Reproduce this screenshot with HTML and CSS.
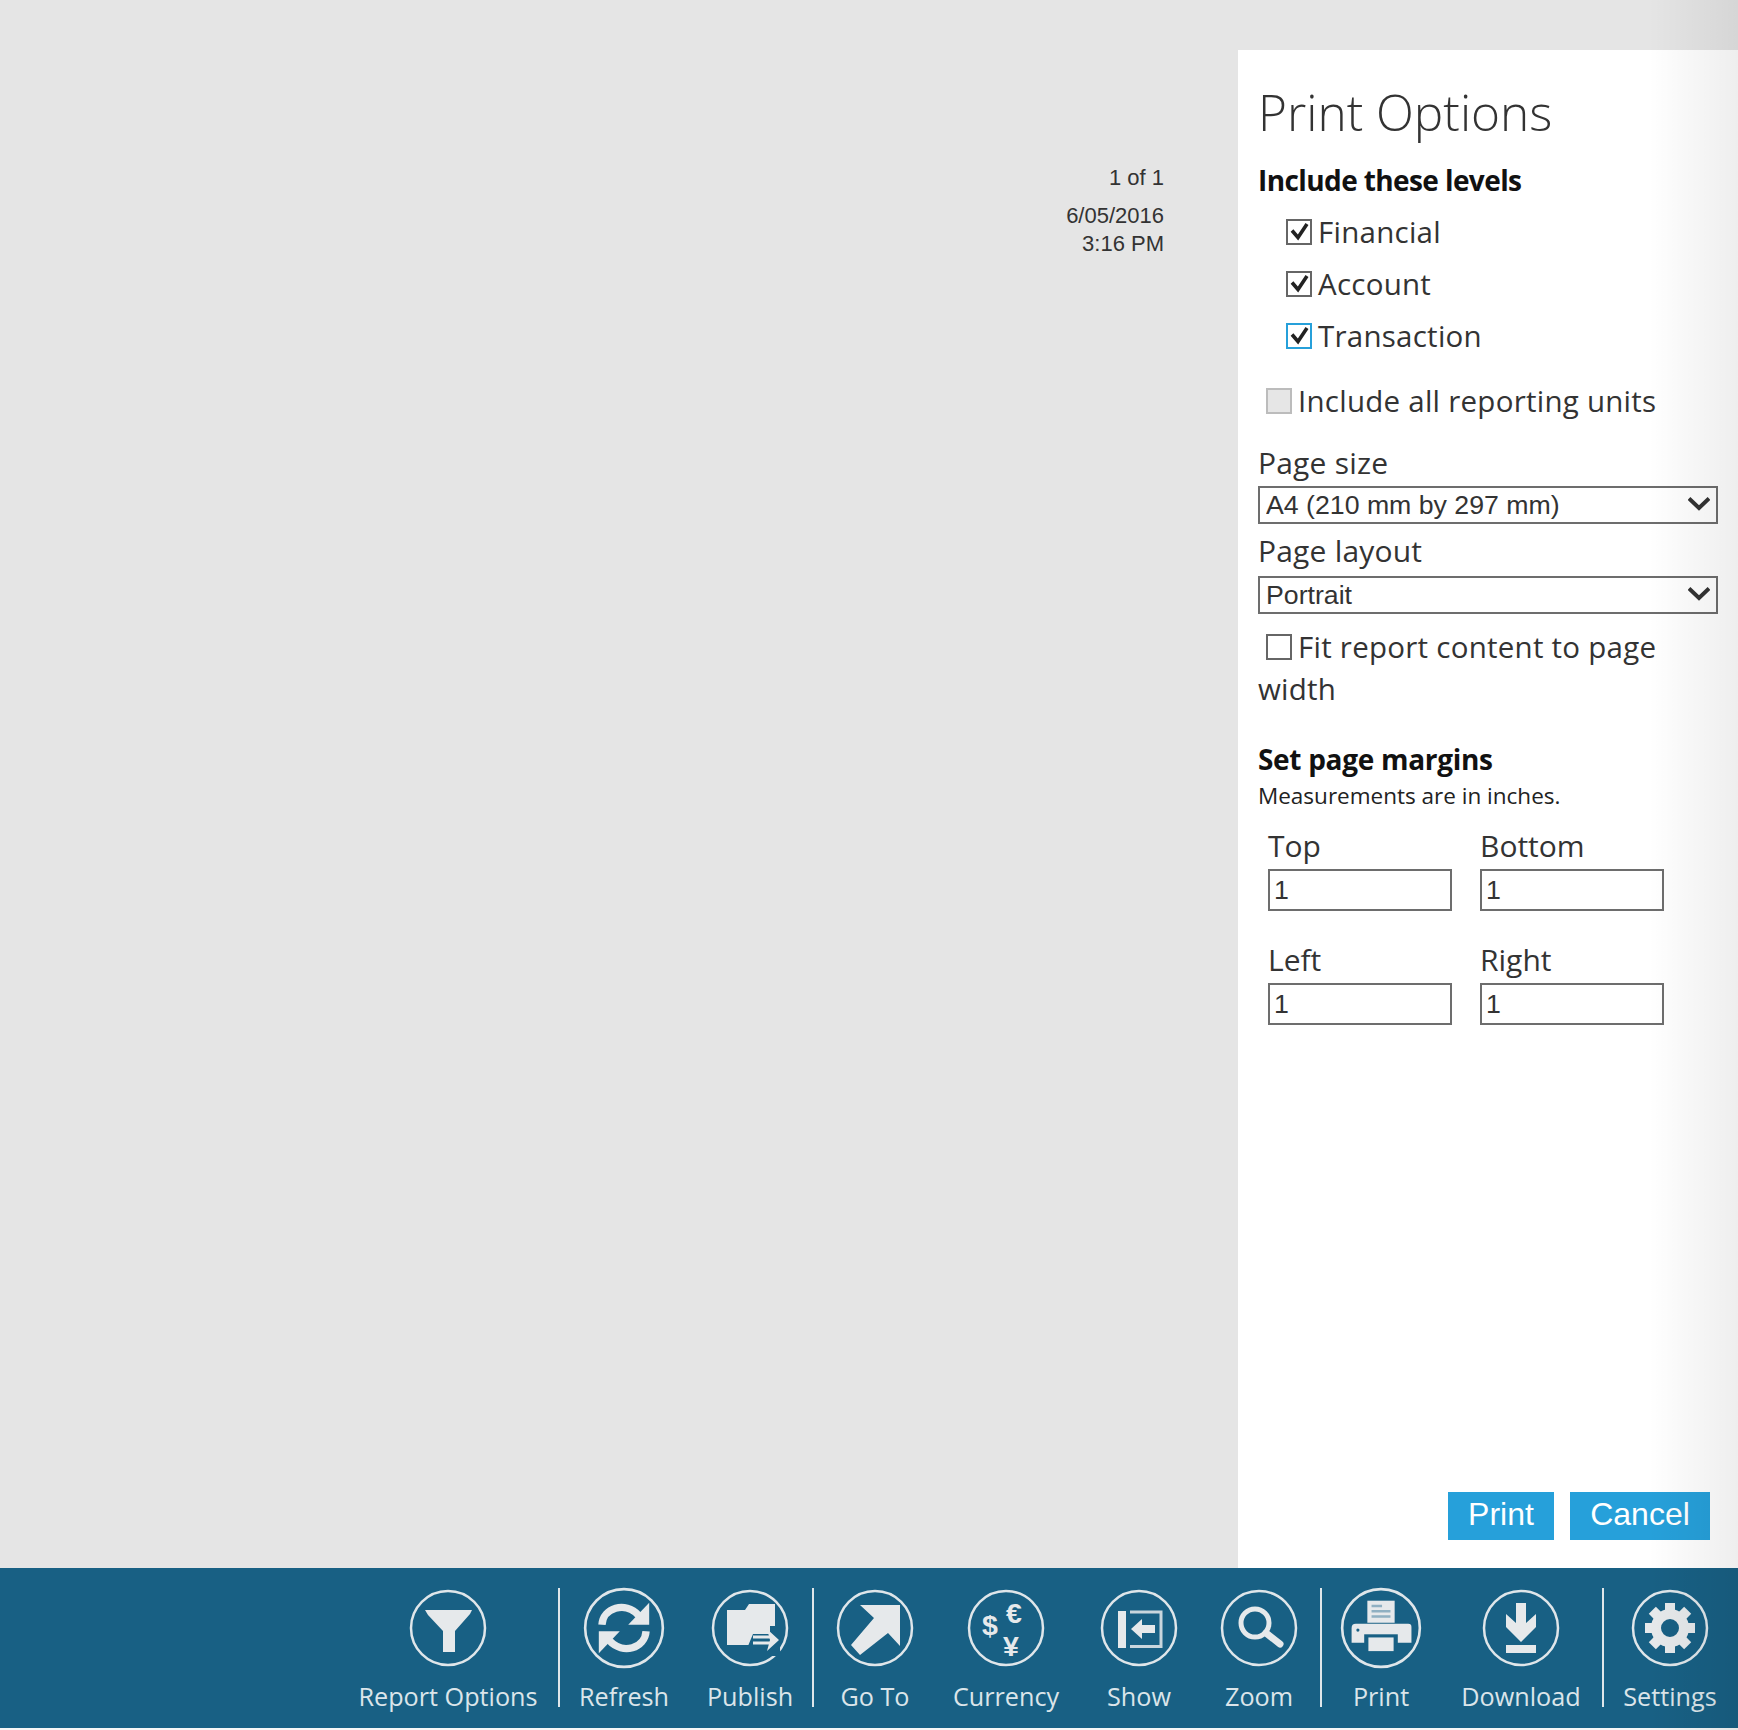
FILE: index.html
```html
<!DOCTYPE html>
<html lang="en">
<head>
<meta charset="utf-8">
<title>Print Options</title>
<link rel="stylesheet" href="styles.css">
</head>
<body>
<div class="app">
  <div class="workspace">
    <section class="report">
      <div class="report-meta">
        <div class="page-count">1 of 1</div>
        <div class="stamp">6/05/2016<br>3:16 PM</div>
      </div>
    </section>
    <aside class="panel">
      <h1 class="panel-title">Print Options</h1>
      <h2 class="heading levels-heading">Include these levels</h2>
      <div class="levels">
        <label class="check level"><span class="box"><svg viewBox="0 0 22 22"><path class="tick" d="M4 9.500 L10 16.500 L19 3"/></svg></span>Financial</label>
        <label class="check level"><span class="box"><svg viewBox="0 0 22 22"><path class="tick" d="M4 9.500 L10 16.500 L19 3"/></svg></span>Account</label>
        <label class="check level"><span class="box box-focus"><svg viewBox="0 0 22 22"><path class="tick" d="M4 9.500 L10 16.500 L19 3"/></svg></span>Transaction</label>
      </div>
      <label class="check all-units"><span class="box box-disabled"></span>Include all reporting units</label>
      <div class="field-label size-label">Page size</div>
      <div class="select-wrap">
        <select class="select"><option>A4 (210 mm by 297 mm)</option></select>
        <svg class="chevron" viewBox="0 0 22 14"><path d="M1 1.500 L11 11 L21 1.500" /></svg>
      </div>
      <div class="field-label layout-label">Page layout</div>
      <div class="select-wrap">
        <select class="select"><option>Portrait</option></select>
        <svg class="chevron" viewBox="0 0 22 14"><path d="M1 1.500 L11 11 L21 1.500" /></svg>
      </div>
      <div class="fit-row"><span class="box"></span>Fit report content to page width</div>
      <h2 class="heading margins-heading">Set page margins</h2>
      <p class="note">Measurements are in inches.</p>
      <div class="margins">
        <div class="margin-field"><div class="margin-label">Top</div><input class="margin-input" type="text" value="1"></div>
        <div class="margin-field"><div class="margin-label">Bottom</div><input class="margin-input" type="text" value="1"></div>
        <div class="margin-field"><div class="margin-label">Left</div><input class="margin-input" type="text" value="1"></div>
        <div class="margin-field"><div class="margin-label">Right</div><input class="margin-input" type="text" value="1"></div>
      </div>
      <div class="actions">
        <button class="btn btn-print">Print</button>
        <button class="btn btn-cancel">Cancel</button>
      </div>
    </aside>
  </div>
  <footer class="toolbar">
    <div class="tool t-report">
      <svg class="icon" viewBox="0 0 80 80"><circle class="ring" cx="40" cy="40" r="37"/><path class="fill" d="M17 22 H64 L62 26 L47 43 V64 H35 V43 L20 27 Z"/></svg>
      <span class="tool-label">Report Options</span>
    </div>
    <div class="sep"></div>
    <div class="tool t-refresh">
      <svg class="icon icon-big" viewBox="0 0 80 80"><circle class="ring" cx="40" cy="40" r="37"/><path class="line-7" d="M19 37 C20 21 41 14 54 28"/><path class="fill" d="M64 16 V37 H44 Z"/><path class="line-7" d="M61 43 C60 59 39 66 26 52"/><path class="fill" d="M16 64 V43 H36 Z"/></svg>
      <span class="tool-label">Refresh</span>
    </div>
    <div class="tool t-publish">
      <svg class="icon" viewBox="0 0 80 80"><circle class="ring" cx="40" cy="40" r="37"/><path class="fill" d="M17 22 H35 L39 16 H65 V57 H17 Z"/><path class="bg" d="M43 46 H60 V38 H70 V68 H41 V58 H38 Z"/><path class="line-2" d="M43 49 H62 M43 55 H62"/><path class="fill" d="M57 41 L69 52 L57 63 L60 52 Z"/></svg>
      <span class="tool-label">Publish</span>
    </div>
    <div class="sep"></div>
    <div class="tool t-goto">
      <svg class="icon" viewBox="0 0 80 80"><circle class="ring" cx="40" cy="40" r="37"/><path class="fill" d="M25 17 H65 V58 L53 45 L25 67 L16 57 L39 30 Z"/></svg>
      <span class="tool-label">Go To</span>
    </div>
    <div class="tool t-currency">
      <svg class="icon" viewBox="0 0 80 80"><circle class="ring" cx="40" cy="40" r="37"/><text class="cur" x="24" y="47">$</text><text class="cur" x="48" y="35">€</text><text class="cur" x="45" y="67.500">¥</text></svg>
      <span class="tool-label">Currency</span>
    </div>
    <div class="tool t-show">
      <svg class="icon" viewBox="0 0 80 80"><circle class="ring" cx="40" cy="40" r="37"/><rect class="fill" x="19" y="23" width="8" height="37"/><path class="line-3" d="M31 24 H62 V58.500 H31"/><path class="fill" d="M32 41 L43 31 V37 H56 V45 H43 V51 Z"/></svg>
      <span class="tool-label">Show</span>
    </div>
    <div class="tool t-zoom">
      <svg class="icon" viewBox="0 0 80 80"><circle class="ring" cx="40" cy="40" r="37"/><circle class="lens" cx="36" cy="35" r="14"/><path class="handle" d="M47 45 L61 56"/></svg>
      <span class="tool-label">Zoom</span>
    </div>
    <div class="sep"></div>
    <div class="tool t-print">
      <svg class="icon icon-big" viewBox="0 0 80 80"><circle class="ring" cx="40" cy="40" r="37"/><rect class="fill" x="27" y="14" width="26" height="21"/><path class="line-ink" d="M31 19 H41 M31 24 H49 M31 29 H49"/><path class="fill" d="M16 36 H66 Q69 36 69 39 V54 H12 V40 Q12 36 16 36 Z"/><rect class="ink" x="24" y="46" width="32" height="10"/><rect class="fill" x="28" y="49" width="24" height="13"/><circle class="dot" cx="18" cy="42" r="1.500"/></svg>
      <span class="tool-label">Print</span>
    </div>
    <div class="tool t-download">
      <svg class="icon" viewBox="0 0 80 80"><circle class="ring" cx="40" cy="40" r="37"/><path class="fill" d="M35 15 H45 V35 L55 26 V39 L40 54 L25 39 V26 L35 35 Z"/><rect class="fill" x="25" y="57" width="30" height="8"/></svg>
      <span class="tool-label">Download</span>
    </div>
    <div class="sep"></div>
    <div class="tool t-settings">
      <svg class="icon" viewBox="0 0 80 80"><circle class="ring" cx="40" cy="40" r="37"/><circle class="gear" cx="40" cy="40" r="14"/><g class="teeth"><rect x="35" y="15" width="10" height="10"/><rect x="35" y="15" width="10" height="10" transform="rotate(45 40 40)"/><rect x="35" y="15" width="10" height="10" transform="rotate(90 40 40)"/><rect x="35" y="15" width="10" height="10" transform="rotate(135 40 40)"/><rect x="35" y="15" width="10" height="10" transform="rotate(180 40 40)"/><rect x="35" y="15" width="10" height="10" transform="rotate(225 40 40)"/><rect x="35" y="15" width="10" height="10" transform="rotate(270 40 40)"/><rect x="35" y="15" width="10" height="10" transform="rotate(315 40 40)"/></g></svg>
      <span class="tool-label">Settings</span>
    </div>
  </footer>
  <div class="edge-shade"></div>
</div>
</body>
</html>
```

FILE: styles.css
```css
* { box-sizing: border-box; }
html, body { margin: 0; padding: 0; }
body { background: #f6f6f6; font-family: "Open Sans", "Liberation Sans", sans-serif; color: #222; }
.app { position: relative; width: 1738px; height: 1730px; overflow: hidden; }
.workspace { display: flex; height: 1568px; background: #e5e5e5; }
.report { width: 1238px; flex: none; padding-top: 164px; }
.report-meta { width: 1164px; text-align: right; font-family: "Liberation Sans", Arial, sans-serif; font-size: 22px; color: #333; }
.page-count { line-height: 28px; margin-bottom: 10px; }
.stamp { line-height: 28px; }
.panel { flex: 1; margin-top: 50px; background: #fff; padding: 0 20px 0 20px; display: flex; flex-direction: column; position: relative; }
.panel-title { margin: 27px 0 0; font-size: 49.5px; line-height: 70px; font-weight: 300; color: #333; }
.heading { margin: 0; font-size: 28px; font-weight: 700; color: #111; line-height: 38px; }
.levels-heading { margin-top: 14px; letter-spacing: -0.6px; }
.levels { padding-left: 28px; margin-top: 14px; display: flex; flex-direction: column; gap: 14px; }
.check { display: flex; align-items: center; font-size: 29.5px; letter-spacing: 0.25px; line-height: 38px; height: 38px; color: #333; }
.box { flex: none; display: inline-block; width: 26px; height: 26px; border: 2px solid #666; background: #fff; margin-right: 6px; }
.box svg { display: block; width: 22px; height: 22px; }
.tick { fill: none; stroke: #222; stroke-width: 3.6; }
.box-focus { border-color: #26a0da; }
.box-disabled { background: #e6e6e6; border-color: #bcbcbc; }
.all-units { margin: 27px 0 0 8px; }
.field-label { font-size: 30px; letter-spacing: 0.2px; line-height: 38px; color: #333; }
.size-label { margin-top: 24px; margin-bottom: 4px; }
.layout-label { margin-top: 8px; margin-bottom: 6px; }
.select-wrap { position: relative; width: 460px; height: 38px; }
.select { display: block; width: 460px; height: 38px; appearance: none; -webkit-appearance: none; background: #fff; border: 2px solid #6d6d6d; border-radius: 0; padding: 0 0 0 6px; font-family: "Liberation Sans", Arial, sans-serif; font-size: 26.7px; color: #333; }
.chevron { position: absolute; right: 8px; top: 11px; width: 22px; height: 14px; fill: none; stroke: #333; stroke-width: 4; }
.fit-row { margin-top: 12px; font-size: 29.5px; letter-spacing: 0.25px; line-height: 42px; color: #333; width: 440px; }
.fit-row .box { margin: 0 6px 0 8px; vertical-align: -2px; }
.margins-heading { margin-top: 30px; letter-spacing: -0.3px; }
.note { margin: 3px 0 0; font-size: 22.5px; line-height: 30px; color: #222; }
.margins { display: grid; grid-template-columns: 184px 184px; column-gap: 28px; row-gap: 30px; margin: 16px 0 0 10px; }
.margin-field { display: flex; flex-direction: column; }
.margin-label { font-size: 30px; line-height: 38px; height: 42px; color: #333; }
.margin-input { width: 184px; height: 42px; border: 2px solid #6d6d6d; border-radius: 0; padding: 0 0 0 4px; font-family: "Liberation Sans", Arial, sans-serif; font-size: 26.7px; color: #333; background: #fff; }
.actions { margin-top: auto; margin-bottom: 28px; display: flex; justify-content: flex-end; gap: 16px; padding-right: 8px; }
.btn { border: 0; border-radius: 0; background: #26a0da; color: #fff; height: 48px; padding: 0 0 4px; font-family: "Liberation Sans", Arial, sans-serif; font-size: 32px; }
.btn-print { width: 106px; }
.btn-cancel { width: 140px; }
.toolbar { height: 160px; background: #186084; display: flex; justify-content: flex-end; padding-right: 2px; }
.tool { flex: none; display: flex; flex-direction: column; align-items: center; padding-top: 20px; }
.t-report { width: 220px; }
.t-refresh { width: 128px; }
.t-publish { width: 124px; }
.t-goto { width: 122px; }
.t-currency { width: 140px; }
.t-show { width: 126px; }
.t-zoom { width: 118px; padding-right: 4px; }
.t-print { width: 118px; }
.t-download { width: 162px; }
.t-settings { width: 132px; }
.icon { width: 80px; height: 80px; display: block; flex: none; }
.icon-big { width: 84px; height: 84px; margin: -2px 0; }
.ring { fill: none; stroke: #dfe6ea; stroke-width: 2.5; }
.fill { fill: #e6e9eb; }
.bg { fill: #186084; }
.line-7 { fill: none; stroke: #e6e9eb; stroke-width: 7; }
.line-2 { fill: none; stroke: #e6e9eb; stroke-width: 3; }
.line-3 { fill: none; stroke: #c9d6dd; stroke-width: 3; }
.line-ink { fill: none; stroke: #8fb0c2; stroke-width: 2.5; }
.ink { fill: #186084; }
.dot { fill: #186084; }
.cur { font-family: "Liberation Sans", Arial, sans-serif; font-size: 28.5px; font-weight: 700; fill: #e6e9eb; text-anchor: middle; }
.lens { fill: none; stroke: #e6e9eb; stroke-width: 5; }
.handle { fill: none; stroke: #e6e9eb; stroke-width: 7; stroke-linecap: round; }
.gear { fill: none; stroke: #e6e9eb; stroke-width: 10; }
.teeth { fill: #e6e9eb; }
.tool-label { margin-top: 11px; font-size: 25.2px; line-height: 34px; color: #dbe5ea; white-space: nowrap; }
.sep { flex: none; width: 2px; height: 119px; margin-top: 20px; background: #dfe6ea; }
.edge-shade { position: absolute; top: 0; right: 0; width: 90px; height: 100%; background: linear-gradient(to right, rgba(0,0,0,0), rgba(0,0,0,0.065)); pointer-events: none; }
```
